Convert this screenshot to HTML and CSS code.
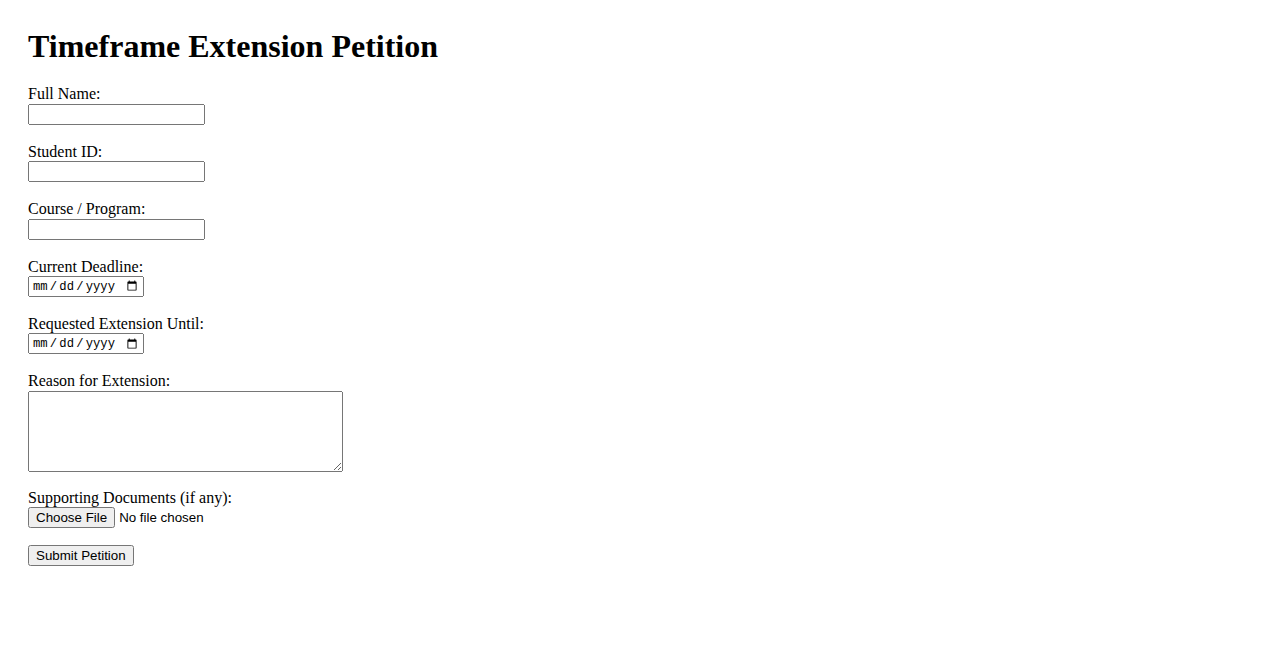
FILE: index.html
```html
<!DOCTYPE html>
<html lang="en">
<head>
<meta charset="utf-8">
<title>Timeframe Extension Petition</title>
<link rel="stylesheet" href="styles.css">
</head>
<body>
<div class="page">
  <h1 class="title">Timeframe Extension Petition</h1>
  <form class="petition">
    <div class="field">
      <label for="name">Full Name:</label>
      <input class="text-input" type="text" id="name">
    </div>
    <div class="field">
      <label for="sid">Student ID:</label>
      <input class="text-input" type="text" id="sid">
    </div>
    <div class="field">
      <label for="course">Course / Program:</label>
      <input class="text-input" type="text" id="course">
    </div>
    <div class="field">
      <label for="current">Current Deadline:</label>
      <input class="date-input" type="date" id="current">
    </div>
    <div class="field">
      <label for="requested">Requested Extension Until:</label>
      <input class="date-input" type="date" id="requested">
    </div>
    <div class="field field-reason">
      <label for="reason">Reason for Extension:</label>
      <textarea class="reason" id="reason" rows="5" cols="40"></textarea>
    </div>
    <div class="field field-file">
      <label for="docs">Supporting Documents (if any):</label>
      <input class="file-input" type="file" id="docs">
    </div>
    <div class="field">
      <button class="submit" type="submit">Submit Petition</button>
    </div>
  </form>
</div>
</body>
</html>
```
FILE: styles.css
```css
body {
  margin: 8px;
  font-family: "Liberation Serif", "Times New Roman", serif;
  font-size: 16px;
  color: #000;
  background: #fff;
}
.page {
  padding: 20px;
}
.title {
  margin: 0 0 20.4px 0;
  font-size: 32px;
  line-height: 37px;
  font-weight: bold;
}
.petition {
  display: flex;
  flex-direction: column;
}
.field {
  display: flex;
  flex-direction: column;
  align-items: flex-start;
  margin-bottom: 18px;
}
.field label {
  line-height: 18.4px;
}
.field-reason {
  margin-bottom: 16.8px;
}
.field-file {
  margin-bottom: 17px;
}
.text-input {
  box-sizing: border-box;
  width: 177px;
  height: 21px;
  font-family: "Liberation Sans", Arial, sans-serif;
  font-size: 13.33px;
}
.date-input {
  box-sizing: border-box;
  width: 116px;
  height: 21px;
  padding: 1px 2px;
  font-family: "Liberation Mono", "DejaVu Sans Mono", monospace;
  font-size: 12.2px;
}
.date-input::-webkit-datetime-edit-text {
  padding: 0 1.2px;
}
.reason {
  box-sizing: border-box;
  width: 315px;
  height: 81px;
  font-family: "Liberation Mono", monospace;
  font-size: 13.33px;
}
.file-input {
  font-family: "Liberation Sans", Arial, sans-serif;
  font-size: 13.33px;
}
.submit {
  font-family: "Liberation Sans", Arial, sans-serif;
  font-size: 13.33px;
}
```
